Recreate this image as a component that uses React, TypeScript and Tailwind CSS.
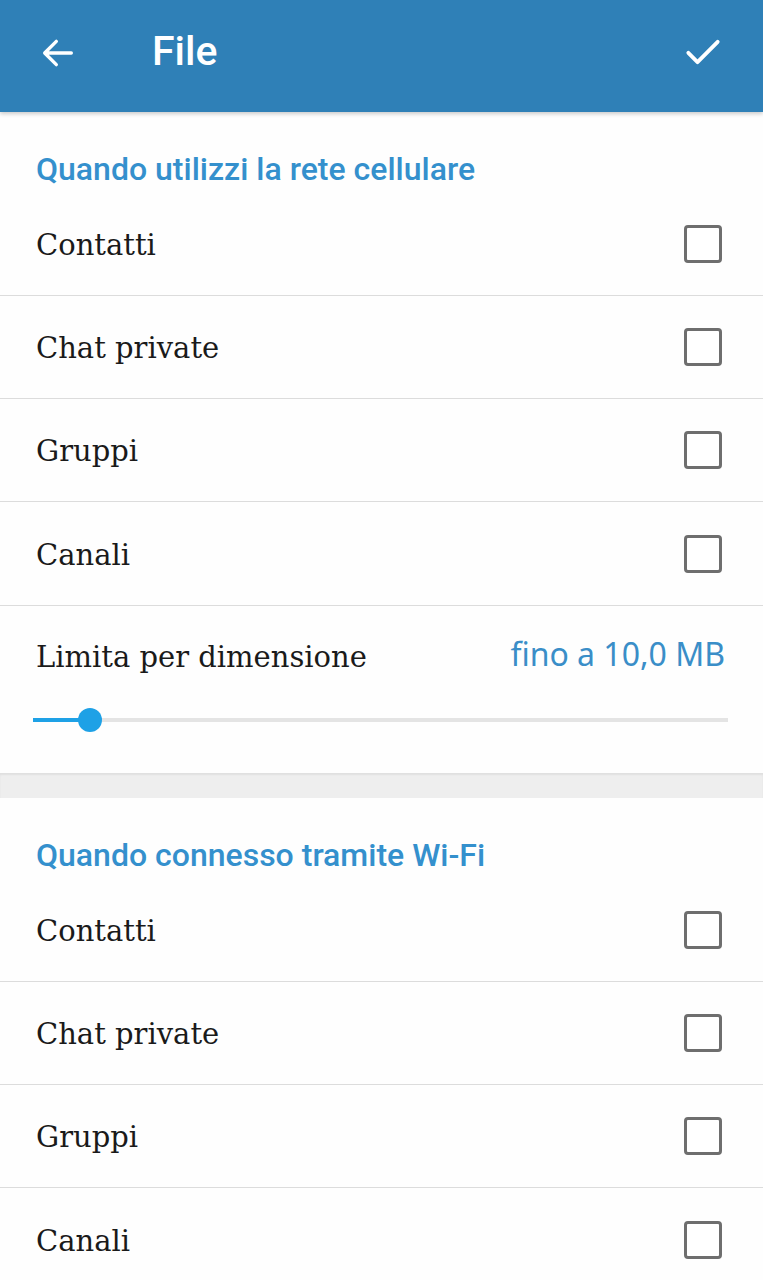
const sections = [
  { title: "Quando utilizzi la rete cellulare", slider: true },
  { title: "Quando connesso tramite Wi-Fi", slider: false },
];

const items = ["Contatti", "Chat private", "Gruppi", "Canali"];

const serif = "font-['DejaVu_Serif',serif]";

const Checkbox = () => (
  <div className="w-[38px] h-[38px] rounded-[4px] border-[3.5px] border-[#6e6e6e] bg-white" />
);

const Row = ({ label, last }: { label: string; last: boolean }) => (
  <div
    className={`flex items-center justify-between h-[103px] pl-[36px] pr-[41px] ${
      last ? "" : "border-b border-[#dcdcdc]"
    }`}
  >
    <span className={`${serif} text-[29px] text-[#1a1a1a] pt-[4px]`}>{label}</span>
    <Checkbox />
  </div>
);

const SizeSlider = () => (
  <div className="border-t border-[#dcdcdc] h-[168px] pl-[36px] pr-[35px]">
    <div className="flex items-start justify-between pt-[30px] pr-[3px]">
      <span className={`${serif} text-[29px] text-[#1a1a1a]`}>Limita per dimensione</span>
      <span className="font-['Noto_Sans',sans-serif] text-[32px] text-[#3a8ec8] leading-none pt-[2px]">
        fino a 10,0 MB
      </span>
    </div>
    <div className="relative mt-[28px] -ml-[3px] h-[24px] flex items-center">
      <div className="h-[4px] w-full bg-[#e4e4e4]" />
      <div className="absolute left-0 top-[10px] h-[4px] w-[57px] bg-[#1ea1e6]" />
      <div className="absolute left-[45px] top-0 w-[24px] h-[24px] rounded-full bg-[#1ea1e6]" />
    </div>
  </div>
);

const App = () => {
  return (
    <div className="w-[763px] min-h-[1280px] bg-[#fefefe] overflow-hidden">
      <div className="h-[112px] bg-[#2f80b7] flex items-center px-[38px] shadow-[0_2px_4px_rgba(0,0,0,0.2)] relative z-10">
        <svg width="40" height="40" viewBox="0 0 24 24" className="-mt-[6px]">
          <path
            d="M20 12H4.5M11 5l-7 7 7 7"
            fill="none"
            stroke="#fff"
            strokeWidth="2"
            strokeLinecap="round"
            strokeLinejoin="round"
          />
        </svg>
        <span className="ml-[74px] -mt-[8px] font-['Roboto',sans-serif] font-medium text-[41px] text-white">
          File
        </span>
        <svg width="44" height="44" viewBox="0 0 24 24" className="ml-auto -mt-[8px]">
          <path
            d="M4 12.5l5 5L20 6.5"
            fill="none"
            stroke="#fff"
            strokeWidth="2.1"
            strokeLinecap="round"
            strokeLinejoin="round"
          />
        </svg>
      </div>
      {sections.map((s, i) => (
        <div key={s.title}>
          {i > 0 && (
            <div className="h-[25px] bg-[#eeeeee] shadow-[inset_0_2px_2px_rgba(0,0,0,0.06)]" />
          )}
          <div className="h-[81px] pl-[36px] pt-[41px]">
            <div className="font-['Roboto',sans-serif] font-medium text-[32px] leading-none text-[#3490cd]">
              {s.title}
            </div>
          </div>
          {items.map((it, j) => (
            <Row key={it} label={it} last={j === items.length - 1} />
          ))}
          {s.slider && <SizeSlider />}
        </div>
      ))}
    </div>
  );
};

export default App;
